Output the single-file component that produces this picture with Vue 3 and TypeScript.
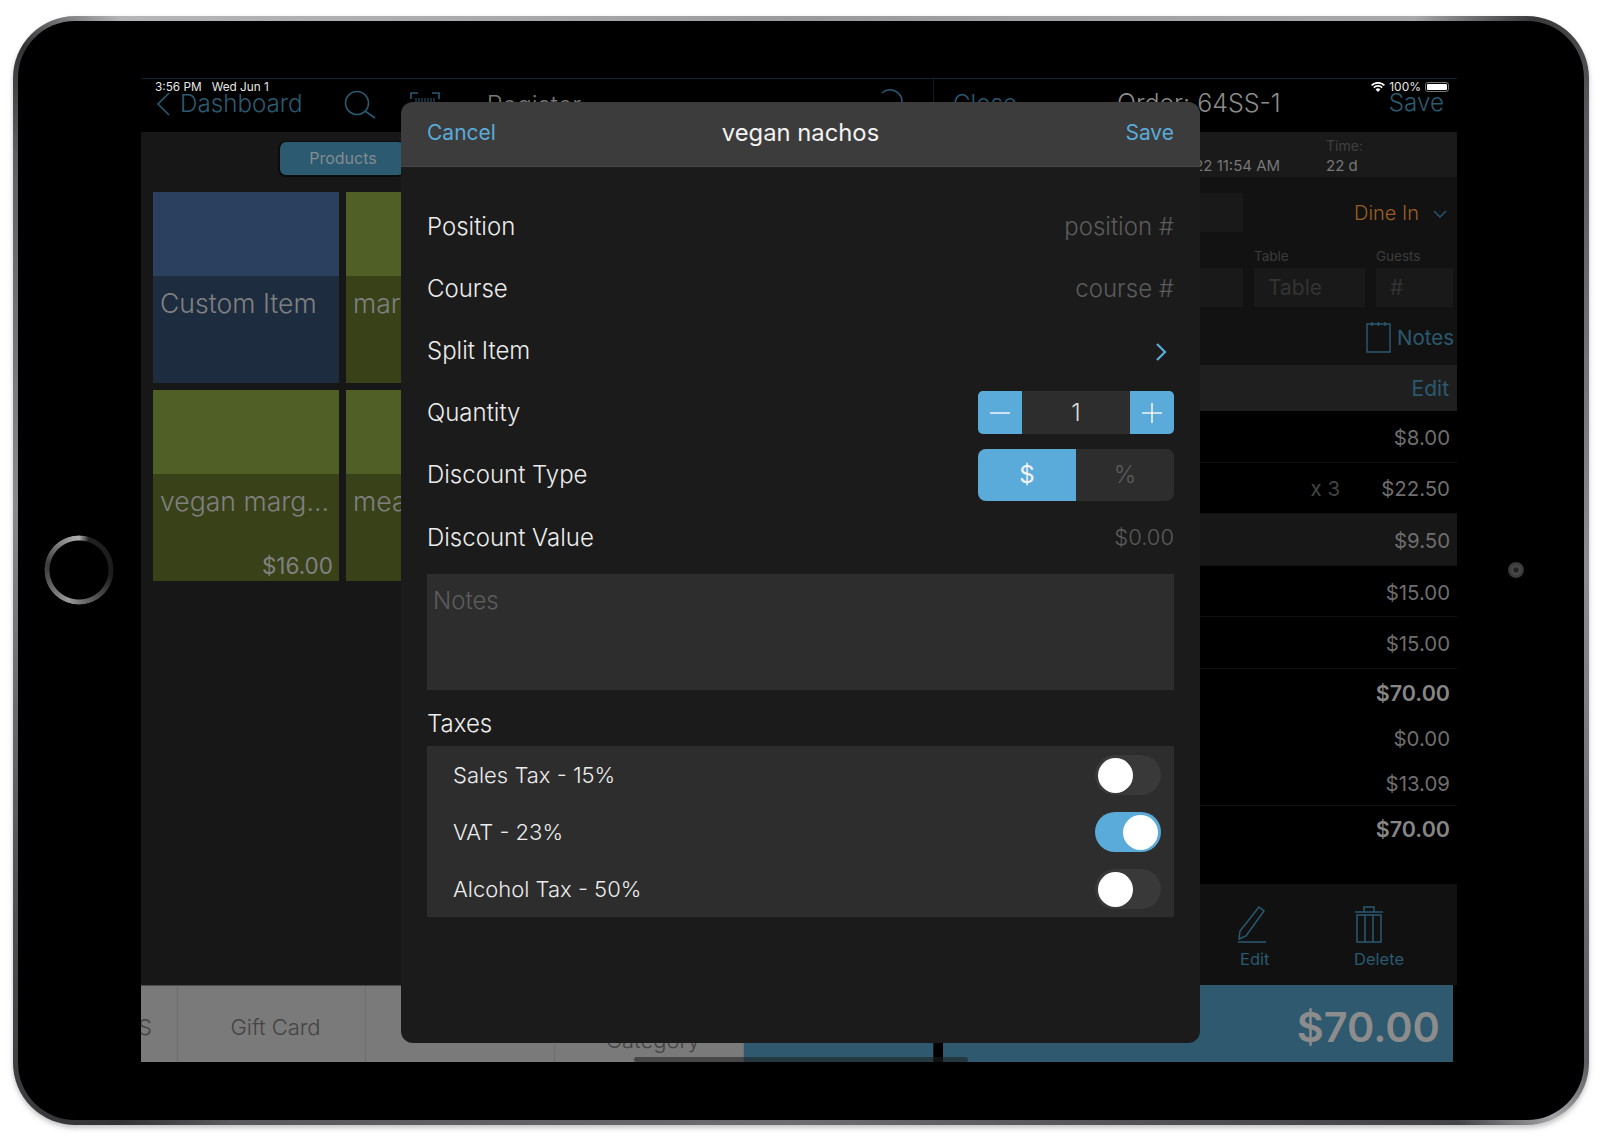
<script setup lang="ts">
interface OrderRow {
  price: string
  qty?: string
  active?: boolean
}

interface Summary {
  price: string
  strong?: boolean
  line?: boolean
}

interface Tax {
  label: string
  on: boolean
}

const orderRows: OrderRow[] = [
  { price: '$8.00' },
  { price: '$22.50', qty: 'x 3' },
  { price: '$9.50', active: true },
  { price: '$15.00' },
  { price: '$15.00' }
]

const summary: Summary[] = [
  { price: '$70.00', strong: true },
  { price: '$0.00' },
  { price: '$13.09', line: true },
  { price: '$70.00', strong: true }
]

const taxes: Tax[] = [
  { label: 'Sales Tax - 15%', on: false },
  { label: 'VAT - 23%', on: true },
  { label: 'Alcohol Tax - 50%', on: false }
]
</script>

<template>
  <div class="page">
    <div class="device">
      <div class="home-button"></div>
      <div class="camera"></div>

      <div class="screen">
        <section class="pane pane-left">
          <header class="nav">
            <svg class="nav-back" width="14" height="24" viewBox="0 0 14 24"><path d="M13 1 2 12l11 11" /></svg>
            <span class="nav-link">Dashboard</span>
            <svg class="nav-search" width="32" height="28" viewBox="0 0 32 28"><circle cx="13" cy="12" r="11.5" /><path d="m21 20 10 7" /></svg>
            <svg class="nav-barcode" width="30" height="24" viewBox="0 0 30 24"><path d="M1 7V1h7M22 1h7v6" /><path d="M6 6v14M9 6v14M12 6v14M15 6v14M18 6v14M21 6v14M24 6v14" /></svg>
            <span class="nav-title">Register</span>
            <svg class="nav-refresh" width="28" height="28" viewBox="0 0 28 28"><path d="M6 5a12 12 0 0 1 20 9" /></svg>
          </header>

          <div class="catalog">
            <div class="tabs"><span class="tab">Products</span></div>
            <div class="tiles">
              <div class="tile tile-blue">
                <div class="tile-top"></div>
                <div class="tile-body"><span>Custom Item</span></div>
              </div>
              <div class="tile tile-green">
                <div class="tile-top"></div>
                <div class="tile-body"><span>margherita</span></div>
              </div>
              <div class="tile tile-green">
                <div class="tile-top"></div>
                <div class="tile-body"><span>vegan marg...</span><em>$16.00</em></div>
              </div>
              <div class="tile tile-green">
                <div class="tile-top"></div>
                <div class="tile-body"><span>meat lovers</span></div>
              </div>
            </div>
          </div>

          <footer class="quick-bar">
            <div class="quick-cell quick-cut"><span>S</span></div>
            <div class="quick-cell quick-gift"><span>Gift Card</span></div>
            <div class="quick-cell quick-blank"></div>
            <div class="quick-cell quick-category"><span>Category</span></div>
            <div class="quick-cell quick-teal"></div>
          </footer>
        </section>

        <div class="split"></div>

        <section class="pane pane-right">
          <header class="nav nav-order">
            <span class="nav-link nav-close">Close</span>
            <span class="nav-order-title">Order: 64SS-1</span>
            <span class="nav-link nav-save">Save</span>
          </header>

          <div class="info-bar">
            <div class="info-date">06/01/22 11:54 AM</div>
            <div class="info-time"><small>Time:</small><span>22 d</span></div>
          </div>

          <div class="details">
            <div class="details-top">
              <div class="input input-name"></div>
              <span class="dine-in">Dine In</span>
              <svg class="dine-chevron" width="14" height="8" viewBox="0 0 14 8"><path d="m1 1 6 6 6-6" /></svg>
            </div>
            <div class="details-fields">
              <div class="field field-blank"><div class="input"></div></div>
              <div class="field field-table"><label>Table</label><div class="input">Table</div></div>
              <div class="field field-guests"><label>Guests</label><div class="input">#</div></div>
            </div>
            <div class="details-notes">
              <svg width="25" height="32" viewBox="0 0 25 32"><path d="M1 3h23v28H1zM6 1v4M12.5 1v4M19 1v4" /></svg>
              <span>Notes</span>
            </div>
          </div>

          <div class="edit-bar">Edit</div>

          <div class="rows">
            <div v-for="(row, i) in orderRows" :key="i" class="row" :class="{ 'row-active': row.active }">
              <span v-if="row.qty" class="row-qty">{{ row.qty }}</span>
              <span class="row-price">{{ row.price }}</span>
            </div>
          </div>

          <div class="summary">
            <div
              v-for="(item, i) in summary"
              :key="i"
              class="summary-row"
              :class="{ 'summary-strong': item.strong, 'summary-line': item.line }"
            >{{ item.price }}</div>
          </div>

          <div class="actions">
            <div class="action action-edit">
              <svg width="30" height="38" viewBox="0 0 30 38"><path d="M22 2 27 6 9 31 2 34l1-8zM1 37h28" /></svg>
              <span>Edit</span>
            </div>
            <div class="action action-delete">
              <svg width="30" height="38" viewBox="0 0 30 38"><path d="M1 7h28M10 7V2h10v5M3 10h24v27H3zM11 10v27M19 10v27" /></svg>
              <span>Delete</span>
            </div>
          </div>

          <footer class="charge"><span>$70.00</span></footer>
        </section>

        <div class="status-time">3:56 PM&nbsp;&nbsp;&nbsp;Wed Jun 1</div>
        <div class="status-right">
          <svg width="14" height="10" viewBox="0 0 14 10"><path d="M7 10 4.6 7.4a3.4 3.4 0 0 1 4.8 0zM3.4 6.2 2.2 5a6.8 6.8 0 0 1 9.6 0l-1.2 1.2a5.1 5.1 0 0 0-7.2 0zM1.2 4 0 2.8a9.9 9.9 0 0 1 14 0L12.8 4a8.3 8.3 0 0 0-11.6 0z" /></svg>
          <span>100%</span>
          <div class="battery"><i></i></div>
        </div>
        <div class="home-indicator"></div>

        <div class="modal">
          <header class="modal-head">
            <span class="modal-action">Cancel</span>
            <span class="modal-title">vegan nachos</span>
            <span class="modal-action modal-save">Save</span>
          </header>

          <div class="modal-body">
            <div class="form-row"><span>Position</span><span class="form-hint">position #</span></div>
            <div class="form-row"><span>Course</span><span class="form-hint">course #</span></div>
            <div class="form-row">
              <span>Split Item</span>
              <svg class="split-chevron" width="13" height="20" viewBox="0 0 13 20"><path d="m2 2 8 8-8 8" /></svg>
            </div>
            <div class="form-row">
              <span>Quantity</span>
              <div class="stepper">
                <button class="step-btn" type="button"><svg width="20" height="20" viewBox="0 0 20 20"><path d="M0 10h20" /></svg></button>
                <span class="step-value">1</span>
                <button class="step-btn" type="button"><svg width="20" height="20" viewBox="0 0 20 20"><path d="M0 10h20M10 0v20" /></svg></button>
              </div>
            </div>
            <div class="form-row">
              <span>Discount Type</span>
              <div class="segment">
                <span class="segment-on">$</span>
                <span class="segment-off">%</span>
              </div>
            </div>
            <div class="form-row"><span>Discount Value</span><span class="form-hint form-value">$0.00</span></div>

            <div class="notes">Notes</div>

            <div class="taxes-label">Taxes</div>
            <div class="taxes">
              <div v-for="tax in taxes" :key="tax.label" class="tax-row">
                <span>{{ tax.label }}</span>
                <span class="toggle" :class="{ 'toggle-on': tax.on }"><i></i></span>
              </div>
            </div>
          </div>
        </div>
      </div>
    </div>
  </div>
</template>

<style>
html,
body {
  margin: 0;
  background: #fff;
}
</style>

<style scoped>
.page {
  box-sizing: border-box;
  width: 1600px;
  height: 1144px;
  padding: 16px 11px 19px 13px;
  background: #fff;
  font-family: Inter, "Liberation Sans", sans-serif;
  overflow: hidden;
}

.device {
  position: relative;
  box-sizing: border-box;
  height: 1109px;
  padding: 57px 127px 58px 123px;
  border: 5px solid transparent;
  border-radius: 62px;
  background-image:
    linear-gradient(#000, #000),
    conic-gradient(#9a9a9c 0deg, #a8a8aa 48deg, #3a3a3c 53deg, #5a5a5e 60deg, #8e8e92 90deg, #5c5c60 122deg, #a5a5a8 126deg, #444448 130deg, #6e6e72 180deg, #5a5a5e 226deg, #333336 231deg, #555559 250deg, #8a8a8e 275deg, #5f5f63 298deg, #333336 304deg, #b5b5b8 309deg, #9a9a9c 360deg);
  background-origin: border-box;
  background-clip: padding-box, border-box;
  box-shadow: 0 3px 5px rgba(90, 90, 90, 0.35);
}

.home-button {
  position: absolute;
  left: 26px;
  top: 514px;
  width: 70px;
  height: 70px;
  border-radius: 50%;
  background: conic-gradient(#b0b0b0 0deg, #202020 18deg, #1c1c1c 100deg, #6a6a6a 170deg, #999 200deg, #505050 255deg, #3a3a3a 280deg, #8a8a8a 330deg, #b0b0b0 360deg);
  -webkit-mask: radial-gradient(circle, transparent 0 29px, #000 30px 34px, transparent 35px);
  mask: radial-gradient(circle, transparent 0 29px, #000 30px 34px, transparent 35px);
  filter: blur(0.6px);
}

.camera {
  position: absolute;
  right: 60px;
  top: 541px;
  width: 16px;
  height: 16px;
  border-radius: 50%;
  background: radial-gradient(circle at 50% 50%, #222 0 18%, #4a4a4a 30%, #343434 70%);
}

.screen {
  position: relative;
  box-sizing: border-box;
  display: flex;
  width: 1316px;
  height: 984px;
  background: #000;
  border-top: 1px solid #0d2232;
  overflow: hidden;
}

.pane {
  display: flex;
  flex-direction: column;
}

.pane-left {
  width: 792px;
}

.split {
  width: 10px;
  border-left: 1px solid #0f1c26;
  box-sizing: border-box;
}

.pane-right {
  width: 514px;
}

.nav {
  position: relative;
  display: flex;
  align-items: center;
  flex: none;
  height: 53px;
}

.nav svg path,
.nav svg circle {
  fill: none;
  stroke: #2a5a70;
  stroke-width: 1.6;
}

.nav-back {
  margin: -3px 0 0 15px;
}

.nav-link {
  margin: -5px 0 0 10px;
  font-size: 24.2px;
  font-weight: 300;
  color: #2a5a70;
}

.nav-search {
  margin: -2px 0 0 41px;
}

.nav-barcode {
  margin: -3px 0 0 34px;
}

.nav-barcode path:last-child {
  stroke-width: 1;
}

.nav-title {
  margin: -1px 0 0 47px;
  font-size: 25px;
  font-weight: 300;
  color: #777;
}

.nav-refresh {
  margin: -8px 0 0 295px;
}

.catalog {
  flex: 1;
  display: flex;
  flex-direction: column;
  background: #171717;
}

.tabs {
  display: flex;
  padding: 9px 0 0 137px;
}

.tab {
  width: 126px;
  height: 33px;
  border: 1px solid #0c0c0c;
  border-width: 1px 0 2px 2px;
  border-radius: 8px;
  background: #2c5a70;
  color: #838c90;
  font-size: 16px;
  line-height: 33px;
  text-align: center;
}

.tiles {
  display: grid;
  grid-template-columns: 186px 186px;
  grid-auto-rows: 191px;
  gap: 7px;
  padding: 15px 0 0 12px;
}

.tile {
  display: flex;
  flex-direction: column;
}

.tile-top {
  flex: none;
  height: 84px;
}

.tile-body {
  position: relative;
  flex: 1;
  padding: 11px 7px;
  color: #808080;
  font-size: 26.6px;
  white-space: nowrap;
  font-weight: 300;
}

.tile-body em {
  position: absolute;
  right: 6px;
  bottom: 2px;
  font-size: 22.5px;
  font-style: normal;
  font-weight: 400;
}

.tile-blue .tile-top {
  background: #2b405f;
}

.tile-blue .tile-body {
  background: #1e2c3f;
}

.tile-green .tile-top {
  background: #505f26;
}

.tile-green .tile-body {
  background: #394119;
}

.quick-bar {
  display: flex;
  flex: none;
  box-sizing: border-box;
  height: 77px;
  background: #7a7a7a;
  border-top: 1px solid #4d4d4d;
  color: #444;
  font-size: 22px;
}

.quick-cell {
  box-sizing: border-box;
  display: flex;
  align-items: center;
  justify-content: center;
  border-right: 1px solid #6f6f6f;
  font-weight: 300;
}

.quick-cut {
  width: 37px;
  justify-content: flex-start;
}

.quick-cut span {
  margin: 5px 0 0 -3px;
}

.quick-gift {
  width: 188px;
}

.quick-gift span {
  margin: 5px 0 0 8px;
}

.quick-blank {
  width: 189px;
}

.quick-category {
  width: 189px;
  align-items: flex-end;
}

.quick-category span {
  margin: 0 0 9px 8px;
}

.quick-teal {
  flex: 1;
  background: #2e596e;
  border: 0;
}

.nav-close {
  margin-left: 10px;
}

.nav-order-title {
  position: absolute;
  left: 174px;
  top: 9px;
  font-size: 25px;
  font-weight: 300;
  color: #8a8a8a;
}

.nav-save {
  position: absolute;
  right: 13px;
  top: 9px;
  margin: 0;
}

.info-bar {
  position: relative;
  flex: none;
  height: 45px;
  background: #1a1a1a;
  color: #777;
  font-size: 15px;
}

.info-date {
  position: absolute;
  left: 206px;
  top: 24px;
}

.info-time {
  position: absolute;
  left: 383px;
  top: 5px;
  display: flex;
  flex-direction: column;
  gap: 2px;
}

.info-time small {
  font-size: 14px;
  color: #3f3f3f;
}

.details {
  flex: none;
  height: 188px;
  background: #121212;
}

.details-top {
  display: flex;
  align-items: center;
  height: 39px;
  padding-top: 16px;
  color: #9a5f24;
  font-size: 20px;
}

.input {
  box-sizing: border-box;
  height: 39px;
  background: #191919;
  color: #333;
  font-size: 21px;
  padding: 0 14px;
  line-height: 39px;
}

.input-name {
  width: 300px;
  font-weight: 300;
}

.dine-in {
  margin-left: 111px;
  font-weight: 300;
}

.dine-chevron {
  margin: 3px 0 0 14px;
}

.dine-chevron path {
  fill: none;
  stroke: #2a5a70;
  stroke-width: 1.4;
}

.details-fields {
  display: flex;
  gap: 11px;
  margin-top: 12px;
}

.field label {
  display: block;
  height: 24px;
  line-height: 24px;
  color: #3c3c3c;
  font-size: 13.5px;
}

.field-blank {
  width: 300px;
  padding-top: 24px;
}

.field-table {
  width: 111px;
}

.field-guests {
  width: 77px;
}

.details-notes {
  display: flex;
  align-items: center;
  justify-content: flex-end;
  gap: 6px;
  margin-top: 14px;
  padding-right: 3px;
  color: #2a5a70;
  font-size: 20.5px;
}

.details-notes path {
  fill: none;
  stroke: #2a5a70;
  stroke-width: 1.4;
}

.edit-bar {
  flex: none;
  box-sizing: border-box;
  height: 46px;
  padding: 1px 8px 0 0;
  background: #1f1f1f;
  color: #2a5a70;
  font-size: 21px;
  line-height: 46px;
  text-align: right;
}

.rows {
  flex: none;
}

.row {
  box-sizing: border-box;
  position: relative;
  height: 51.6px;
  display: flex;
  align-items: center;
  justify-content: flex-end;
  padding: 2px 7px 0 0;
  border-bottom: 1px solid #111;
  color: #6e6e6e;
  font-size: 20.4px;
}

.row-qty {
  position: absolute;
  right: 117px;
  color: #444;
}

.row-active {
  background: #171717;
}

.summary {
  flex: 1;
  padding-top: 2px;
}

.summary-row {
  box-sizing: border-box;
  height: 45px;
  line-height: 45px;
  text-align: right;
  padding-right: 7px;
  color: #6e6e6e;
  font-size: 20.4px;
}

.summary-strong {
  color: #868686;
  font-size: 21.5px;
  font-weight: 600;
}

.summary-line {
  border-bottom: 1px solid #111;
  margin-bottom: 1px;
}

.actions {
  position: relative;
  flex: none;
  height: 101px;
  background: #111;
  color: #2a5a70;
  font-size: 16.5px;
}

.action {
  position: absolute;
  top: 21px;
  display: flex;
  flex-direction: column;
  align-items: flex-start;
  gap: 6px;
}

.action path {
  fill: none;
  stroke: #2a5a70;
  stroke-width: 1.5;
}

.action-edit {
  left: 294px;
}

.action-edit span {
  margin-left: 3px;
}

.action-delete {
  left: 411px;
}

.charge {
  display: flex;
  align-items: center;
  justify-content: flex-end;
  flex: none;
  box-sizing: border-box;
  width: 510px;
  height: 77px;
  padding: 6px 13px 0 0;
  background: #2e596e;
  color: #8c8c8c;
  font-size: 41.5px;
  font-weight: 600;
}

.status-time {
  position: absolute;
  left: 14px;
  top: 1px;
  color: #e6e6e6;
  font-size: 11.8px;
  line-height: 14px;
}

.status-right {
  position: absolute;
  right: 8px;
  top: 1px;
  display: flex;
  align-items: center;
  gap: 4px;
  color: #e6e6e6;
  font-size: 12px;
  line-height: 14px;
}

.status-right path {
  fill: #fff;
}

.battery {
  box-sizing: border-box;
  width: 24px;
  height: 10px;
  padding: 1px;
  border: 1px solid #777;
  border-radius: 3px;
}

.battery i {
  display: block;
  height: 100%;
  background: #fff;
  border-radius: 1px;
}

.home-indicator {
  position: absolute;
  left: 493px;
  bottom: 0;
  width: 334px;
  height: 5px;
  border-radius: 3px;
  background: rgba(30, 30, 30, 0.55);
}

.modal {
  position: absolute;
  left: 260px;
  top: 23px;
  width: 799px;
  height: 941px;
  border-radius: 12px;
  background: #1b1b1b;
  overflow: hidden;
  color: #ececec;
  font-size: 24px;
  font-weight: 300;
}

.modal-head {
  display: grid;
  grid-template-columns: 1fr auto 1fr;
  align-items: center;
  box-sizing: border-box;
  height: 65px;
  padding: 0 26px 3px;
  background: #3c3c3c;
  border-bottom: 1px solid #474747;
}

.modal-action {
  color: #5aabd9;
  font-size: 21px;
  font-weight: 400;
}

.modal-save {
  text-align: right;
}

.modal-title {
  color: #f2f2f2;
  font-size: 23.8px;
  font-weight: 400;
}

.modal-body {
  padding: 28px 26px 0;
}

.form-row {
  display: flex;
  align-items: center;
  justify-content: space-between;
  height: 62.2px;
}

.form-hint {
  color: #5c5c5c;
}

.form-value {
  font-size: 22px;
}

.split-chevron {
  margin: 3px 6px 0 0;
}

.split-chevron path {
  fill: none;
  stroke: #5aabd9;
  stroke-width: 2.2;
}

.stepper {
  display: flex;
  align-items: center;
  width: 196px;
  height: 43px;
  border-radius: 5px;
  background: #2d2d2d;
  overflow: hidden;
}

.step-btn {
  display: flex;
  align-items: center;
  justify-content: center;
  width: 44px;
  height: 43px;
  padding: 0;
  border: 0;
  background: #5aabd9;
}

.step-btn path {
  fill: none;
  stroke: #f4f4f4;
  stroke-width: 1.6;
}

.step-value {
  flex: 1;
  text-align: center;
  color: #ddd;
}

.segment {
  display: flex;
  width: 196px;
  height: 52px;
  border-radius: 8px;
  background: #2d2d2d;
  overflow: hidden;
  line-height: 52px;
  text-align: center;
}

.segment-on {
  width: 98px;
  background: #5aabd9;
  color: #f4f4f4;
  font-weight: 400;
}

.segment-off {
  flex: 1;
  color: #5c5c5c;
}

.notes {
  box-sizing: border-box;
  height: 116px;
  margin-top: 6px;
  padding: 12px 6px;
  background: #2d2d2d;
  color: #5c5c5c;
}

.taxes-label {
  height: 56px;
  line-height: 68px;
}

.taxes {
  background: #2d2d2d;
}

.tax-row {
  display: flex;
  align-items: center;
  justify-content: space-between;
  box-sizing: border-box;
  height: 57px;
  padding: 0 13px 0 26px;
  font-size: 22px;
}

.toggle {
  position: relative;
  width: 66px;
  height: 40px;
  border-radius: 20px;
  background: #393939;
}

.toggle i {
  position: absolute;
  left: 3px;
  top: 3px;
  width: 35px;
  height: 35px;
  border-radius: 50%;
  background: #fff;
}

.toggle-on {
  background: #5aabd9;
}

.toggle-on i {
  left: 28px;
}
</style>
